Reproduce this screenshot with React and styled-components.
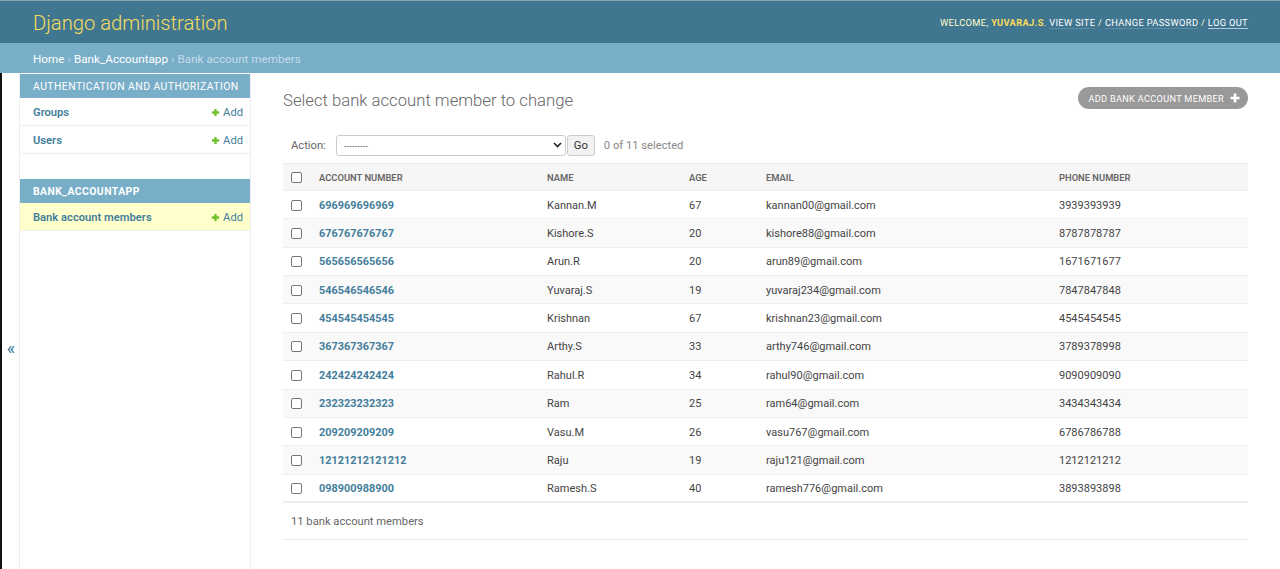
import styled, { createGlobalStyle } from 'styled-components';

const GlobalStyle = createGlobalStyle`
  body {
    margin: 0;
    background: #ffffff;
    color: #333333;
    font-family: Roboto, 'Liberation Sans', sans-serif;
  }
  a { text-decoration: none; }
`;

const Page = styled.div`
  width: 1280px;
  min-height: 569px;
  display: flex;
  flex-direction: column;
`;

const Header = styled.header`
  height: 42px;
  border-top: 1px solid #86a3b1;
  background: #417690;
  display: flex;
  align-items: center;
  justify-content: space-between;
  padding: 0 32px 0 33px;
`;

const Branding = styled.h1`
  margin: 1px 0 0 0;
  font-size: 20.2px;
  font-weight: 300;
  color: #f5dd5d;
`;

const UserTools = styled.div`
  font-size: 9.3px;
  letter-spacing: 0.35px;
  text-transform: uppercase;
  color: #ffffcc;
  padding-top: 1px;
  strong {
    font-weight: 700;
    color: #f5dd5d;
  }
  a {
    color: #ffffff;
    border-bottom: 1px solid rgba(255, 255, 255, 0.15);
  }
  a:last-child {
    border-bottom-color: rgba(255, 255, 255, 0.6);
  }
`;

const Breadcrumbs = styled.div`
  height: 30px;
  background: #79aec8;
  display: flex;
  align-items: center;
  padding: 1px 0 0 33px;
  box-sizing: border-box;
  font-size: 11.7px;
  color: #c4dce8;
  a {
    color: #ffffff;
  }
  span {
    margin: 0 3px;
  }
`;

const Main = styled.div`
  flex: 1;
  display: flex;
  align-items: stretch;
`;

const ToggleNav = styled.button`
  width: 20px;
  flex: 0 0 20px;
  border: 0;
  border-left: 2px solid #111111;
  border-right: 1px solid #eeeeee;
  background: #ffffff;
  color: #447e9b;
  font-size: 18px;
  font-family: Roboto, sans-serif;
  padding: 264px 0 0 1px;
  display: flex;
  align-items: flex-start;
  justify-content: center;
`;

const NavSidebar = styled.nav`
  width: 230px;
  flex: 0 0 230px;
  border-right: 1px solid #eeeeee;
  padding-top: 1px;
`;

const Module = styled.div`
  margin-bottom: 25px;
`;

const Caption = styled.div`
  height: 24px;
  background: #79aec8;
  color: #ffffff;
  font-size: 10.4px;
  letter-spacing: 0.45px;
  text-transform: uppercase;
  font-weight: ${(p) => (p.$current ? 700 : 400)};
  display: flex;
  align-items: center;
  padding-left: 13px;
`;

const ModelRow = styled.div`
  height: 28px;
  box-sizing: border-box;
  border-bottom: 1px solid #eeeeee;
  background: ${(p) => (p.$current ? '#ffffcc' : '#ffffff')};
  display: flex;
  align-items: center;
  justify-content: space-between;
  padding: 1px 7px 0 13px;
  font-size: 11.2px;
  a {
    color: #447e9b;
    font-weight: 600;
  }
`;

const AddLink = styled.a`
  display: flex;
  align-items: center;
  gap: 3px;
  color: #447e9b;
  font-size: 11.2px;
  && {
    font-weight: 400;
  }
`;

const Content = styled.div`
  flex: 1;
  padding: 13px 32px 0 32px;
`;

const TitleBar = styled.div`
  display: flex;
  justify-content: space-between;
  align-items: flex-start;
  height: 48px;
`;

const Title = styled.h1`
  margin: 5px 0 0 0;
  font-size: 16.7px;
  font-weight: 300;
  color: #666666;
`;

const AddButton = styled.a`
  height: 22px;
  border-radius: 11px;
  background: #999999;
  color: #ffffff;
  font-size: 9.2px;
  letter-spacing: 0.3px;
  text-transform: uppercase;
  display: flex;
  align-items: center;
  gap: 6px;
  padding: 0 8px 0 10px;
  margin-top: 1px;
`;

const Actions = styled.div`
  display: flex;
  align-items: center;
  height: 22px;
  padding-left: 8px;
  margin-bottom: 7px;
  font-size: 11.2px;
  color: #666666;
`;

const ActionLabel = styled.label`
  margin-right: 10px;
`;

const SelectBox = styled.div`
  position: relative;
  width: 221px;
  height: 19px;
  border: 1px solid #cccccc;
  border-radius: 3px;
  padding-left: 7px;
  display: flex;
  align-items: center;
  color: #333333;
  font-size: 8px;
  font-family: 'Liberation Sans', sans-serif;
  svg {
    position: absolute;
    right: 3px;
    top: 6px;
  }
`;

const GoButton = styled.button`
  height: 21px;
  margin-left: 1px;
  border: 1px solid #cccccc;
  border-radius: 3px;
  background: #f2f2f2;
  color: #333333;
  font-family: Roboto, sans-serif;
  font-size: 11.2px;
  padding: 0 6px;
`;

const SelectedCount = styled.span`
  margin-left: 9px;
  color: #888888;
`;

const Table = styled.table`
  width: 965px;
  border-collapse: collapse;
  table-layout: fixed;
  border-bottom: 2px solid #eeeeee;
`;

const Th = styled.th`
  height: 27px;
  padding: 1px 8px 0 8px;
  background: #f6f6f6;
  border-top: 1px solid #eeeeee;
  border-bottom: 1px solid #eeeeee;
  text-align: left;
  font-size: 9.4px;
  font-weight: 600;
  color: #666666;
  text-transform: uppercase;
  box-sizing: border-box;
`;

const Tr = styled.tr`
  height: 28.36px;
  background: ${(p) => (p.$alt ? '#f9f9f9' : '#ffffff')};
`;

const Td = styled.td`
  padding: 1px 8px 0 8px;
  border-bottom: 1px solid #eeeeee;
  font-size: 11px;
  color: #444444;
  box-sizing: border-box;
  a {
    color: #447e9b;
    font-weight: 700;
    font-size: 10.9px;
  }
`;

const Check = styled.span`
  display: block;
  width: 9px;
  height: 9px;
  border: 1px solid #767676;
  border-radius: 2px;
  background: #ffffff;
`;

const Paginator = styled.p`
  margin: 0;
  height: 36px;
  display: flex;
  align-items: center;
  padding-left: 8px;
  font-size: 11.2px;
  color: #666666;
  border-bottom: 1px solid #eeeeee;
  width: 957px;
`;

const GreenPlus = () => (
  <svg width="9" height="9" viewBox="0 0 10 10">
    <path d="M5 1v8M1 5h8" stroke="#70bf2b" strokeWidth="2.6" />
  </svg>
);

const WhitePlus = () => (
  <svg width="10" height="10" viewBox="0 0 10 10">
    <path d="M5 0.5v9M0.5 5h9" stroke="#ffffff" strokeWidth="2.6" />
  </svg>
);

const members = [
  ['696969696969', 'Kannan.M', 67, 'kannan00@gmail.com', '3939393939'],
  ['676767676767', 'Kishore.S', 20, 'kishore88@gmail.com', '8787878787'],
  ['565656565656', 'Arun.R', 20, 'arun89@gmail.com', '1671671677'],
  ['546546546546', 'Yuvaraj.S', 19, 'yuvaraj234@gmail.com', '7847847848'],
  ['454545454545', 'Krishnan', 67, 'krishnan23@gmail.com', '4545454545'],
  ['367367367367', 'Arthy.S', 33, 'arthy746@gmail.com', '3789378998'],
  ['242424242424', 'Rahul.R', 34, 'rahul90@gmail.com', '9090909090'],
  ['232323232323', 'Ram', 25, 'ram64@gmail.com', '3434343434'],
  ['209209209209', 'Vasu.M', 26, 'vasu767@gmail.com', '6786786788'],
  ['12121212121212', 'Raju', 19, 'raju121@gmail.com', '1212121212'],
  ['098900988900', 'Ramesh.S', 40, 'ramesh776@gmail.com', '3893893898'],
];

const columns = [
  { label: '', width: 28 },
  { label: 'Account number', width: 228 },
  { label: 'Name', width: 142 },
  { label: 'Age', width: 77 },
  { label: 'Email', width: 293 },
  { label: 'Phone number', width: 197 },
];

export default function App() {
  return (
    <Page>
      <GlobalStyle />
      <Header>
        <Branding>Django administration</Branding>
        <UserTools>
          Welcome, <strong>Yuvaraj.S</strong>. <a>View site</a> / <a>Change password</a> / <a>Log out</a>
        </UserTools>
      </Header>
      <Breadcrumbs>
        <a>Home</a>
        <span>›</span>
        <a>Bank_Accountapp</a>
        <span>›</span>
        Bank account members
      </Breadcrumbs>
      <Main>
        <ToggleNav>«</ToggleNav>
        <NavSidebar>
          <Module>
            <Caption>Authentication and Authorization</Caption>
            <ModelRow>
              <a>Groups</a>
              <AddLink><GreenPlus />Add</AddLink>
            </ModelRow>
            <ModelRow>
              <a>Users</a>
              <AddLink><GreenPlus />Add</AddLink>
            </ModelRow>
          </Module>
          <Module>
            <Caption $current>Bank_Accountapp</Caption>
            <ModelRow $current>
              <a>Bank account members</a>
              <AddLink><GreenPlus />Add</AddLink>
            </ModelRow>
          </Module>
        </NavSidebar>
        <Content>
          <TitleBar>
            <Title>Select bank account member to change</Title>
            <AddButton>Add bank account member <WhitePlus /></AddButton>
          </TitleBar>
          <Actions>
            <ActionLabel>Action:</ActionLabel>
            <SelectBox>
              ---------
              <svg width="9" height="6" viewBox="0 0 9 6">
                <path d="M1 1l3.5 3.5L8 1" stroke="#222" strokeWidth="1.6" fill="none" />
              </svg>
            </SelectBox>
            <GoButton>Go</GoButton>
            <SelectedCount>0 of 11 selected</SelectedCount>
          </Actions>
          <Table>
            <colgroup>
              {columns.map((c, i) => (
                <col key={i} style={{ width: c.width }} />
              ))}
            </colgroup>
            <thead>
              <tr>
                {columns.map((c, i) => (
                  <Th key={i}>{i === 0 ? <Check /> : c.label}</Th>
                ))}
              </tr>
            </thead>
            <tbody>
              {members.map((m, i) => (
                <Tr key={m[0]} $alt={i % 2 === 1}>
                  <Td><Check /></Td>
                  <Td><a>{m[0]}</a></Td>
                  <Td>{m[1]}</Td>
                  <Td>{m[2]}</Td>
                  <Td>{m[3]}</Td>
                  <Td>{m[4]}</Td>
                </Tr>
              ))}
            </tbody>
          </Table>
          <Paginator>11 bank account members</Paginator>
        </Content>
      </Main>
    </Page>
  );
}
